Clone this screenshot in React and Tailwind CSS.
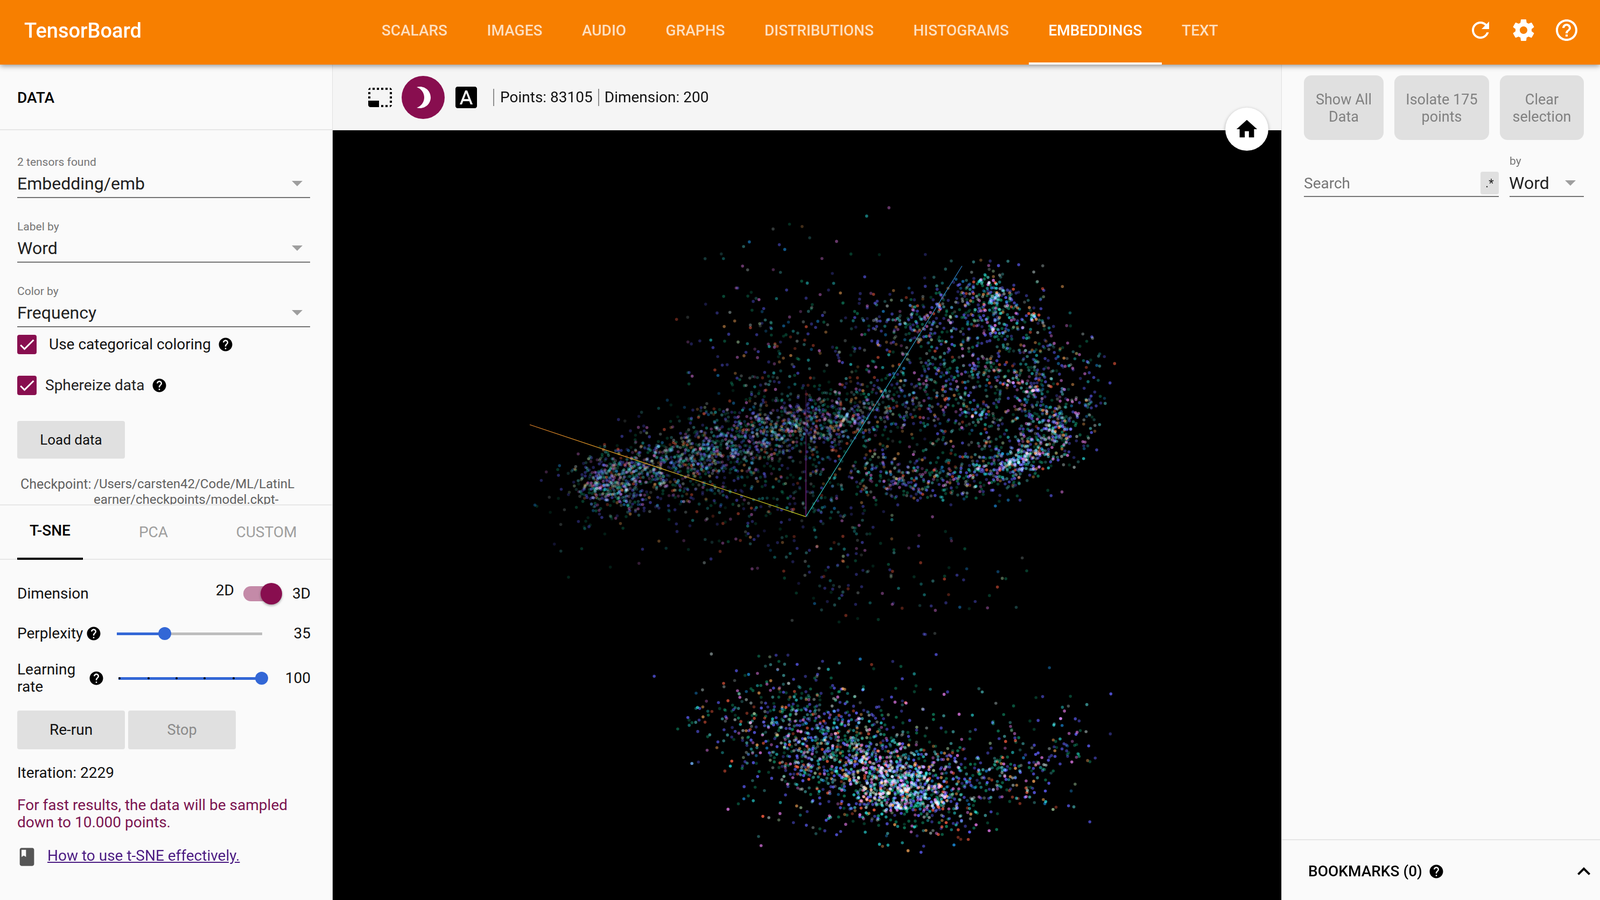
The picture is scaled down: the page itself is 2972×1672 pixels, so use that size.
const ICONS = {
  selection: 'M23 15h-2v2h2v-2zm0-4h-2v2h2v-2zm0 8h-2v2c1 0 2-1 2-2zM15 3h-2v2h2V3zm8 4h-2v2h2V7zm-2-4v2h2c0-1-1-2-2-2zM3 21h8v-6H1v4c0 1.1.9 2 2 2zM3 7H1v2h2V7zm12 12h-2v2h2v-2zm4-16h-2v2h2V3zm0 16h-2v2h2v-2zM3 3C2 3 1 4 1 5h2V3zm0 8H1v2h2v-2zm8-8H9v2h2V3zM7 3H5v2h2V3z',
  moon: 'M9 2c-1.05 0-2.05.16-3 .46 4.06 1.27 7 5.06 7 9.54 0 4.48-2.94 8.27-7 9.54.95.3 1.95.46 3 .46 5.52 0 10-4.48 10-10S14.52 2 9 2z',
  font: 'M9.93 13.5h4.14L12 7.98zM20 2H4c-1.1 0-2 .9-2 2v16c0 1.1.9 2 2 2h16c1.1 0 2-.9 2-2V4c0-1.1-.9-2-2-2zm-4.05 16.5l-1.14-3H9.17l-1.12 3H5.96l5.11-13h1.86l5.11 13h-2.09z',
  home: 'M10 20v-6h4v6h5v-8h3L12 3 2 12h3v8z',
  refresh: 'M17.65 6.35C16.2 4.9 14.21 4 12 4c-4.42 0-7.99 3.58-7.99 8s3.57 8 7.99 8c3.73 0 6.84-2.55 7.73-6h-2.08c-.82 2.33-3.04 4-5.65 4-3.31 0-6-2.69-6-6s2.69-6 6-6c1.66 0 3.14.69 4.22 1.78L13 11h7V4l-2.35 2.35z',
  settings: 'M19.43 12.98c.04-.32.07-.64.07-.98s-.03-.66-.07-.98l2.11-1.65c.19-.15.24-.42.12-.64l-2-3.46c-.12-.22-.39-.3-.61-.22l-2.49 1c-.52-.4-1.08-.73-1.69-.98l-.38-2.65C14.46 2.18 14.25 2 14 2h-4c-.25 0-.46.18-.49.42l-.38 2.65c-.61.25-1.17.59-1.69.98l-2.49-1c-.23-.09-.49 0-.61.22l-2 3.46c-.13.22-.07.49.12.64l2.11 1.65c-.04.32-.07.65-.07.98s.03.66.07.98l-2.11 1.65c-.19.15-.24.42-.12.64l2 3.46c.12.22.39.3.61.22l2.49-1c.52.4 1.08.73 1.69.98l.38 2.65c.03.24.24.42.49.42h4c.25 0 .46-.18.49-.42l.38-2.65c.61-.25 1.17-.59 1.69-.98l2.49 1c.23.09.49 0 .61-.22l2-3.46c.12-.22.07-.49-.12-.64l-2.11-1.65zM12 15.5c-1.93 0-3.5-1.57-3.5-3.5s1.57-3.5 3.5-3.5 3.5 1.57 3.5 3.5-1.57 3.5-3.5 3.5z',
  helpOutline: 'M11 18h2v-2h-2v2zm1-16C6.48 2 2 6.48 2 12s4.48 10 10 10 10-4.48 10-10S17.52 2 12 2zm0 18c-4.41 0-8-3.59-8-8s3.59-8 8-8 8 3.59 8 8-3.59 8-8 8zm0-14c-2.21 0-4 1.79-4 4h2c0-1.1.9-2 2-2s2 .9 2 2c0 2-3 1.75-3 5h2c0-2.25 3-2.5 3-5 0-2.21-1.79-4-4-4z',
  help: 'M12 2C6.48 2 2 6.48 2 12s4.48 10 10 10 10-4.48 10-10S17.52 2 12 2zm1 17h-2v-2h2v2zm2.07-7.75l-.9.92C13.45 12.9 13 13.5 13 15h-2v-.5c0-1.1.45-2.1 1.17-2.83l1.24-1.26c.37-.36.59-.86.59-1.41 0-1.1-.9-2-2-2s-2 .9-2 2H8c0-2.21 1.79-4 4-4s4 1.79 4 4c0 .88-.36 1.68-.93 2.25z',
  check: 'M9 16.17L4.83 12l-1.42 1.41L9 19 21 7l-1.41-1.41z',
  book: 'M18 2H6c-1.1 0-2 .9-2 2v16c0 1.1.9 2 2 2h12c1.1 0 2-.9 2-2V4c0-1.1-.9-2-2-2zM6 4h5v8l-2.5-1.5L6 12V4z',
  chevron: 'M12 8l-6 6 1.41 1.41L12 10.83l4.59 4.58L18 14z',
}

const TABS = ['SCALARS', 'IMAGES', 'AUDIO', 'GRAPHS', 'DISTRIBUTIONS', 'HISTOGRAMS', 'EMBEDDINGS', 'TEXT']

function Icon({ name, className }) {
  return (
    <svg viewBox="0 0 24 24" className={`shrink-0 fill-current ${className}`}>
      <path d={ICONS[name]} />
    </svg>
  )
}

function HelpIcon({ className = '' }) {
  return <Icon name="help" className={`w-[30px] h-[30px] text-black ${className}`} />
}

function Caret() {
  return (
    <svg viewBox="0 0 20 10" className="w-[20px] h-[10px] shrink-0 fill-[#9e9e9e]">
      <path d="M0 0h20L10 10z" />
    </svg>
  )
}

function Dropdown({ label, value }) {
  return (
    <div>
      <div className="text-[21px] leading-[30px] text-[#757575]">{label}</div>
      <div className="h-[52px] flex items-center justify-between pr-[14px] border-b-2 border-[#737373]">
        <span className="text-[32px] text-[#212121]">{value}</span>
        <Caret />
      </div>
    </div>
  )
}

function Checkbox() {
  return (
    <div className="w-[36px] h-[36px] rounded-[4px] bg-[#880e4f] flex items-center justify-center shrink-0">
      <Icon name="check" className="w-[36px] h-[36px] text-white" />
    </div>
  )
}

function GrayButton({ children, className }) {
  return <button className={`w-[200px] rounded-[4px] bg-[#e0e0e0] ${className}`}>{children}</button>
}

function Slider({ className, percent, ticks }) {
  return (
    <div className={`relative h-[30px] flex items-center ${className}`}>
      <div className="w-full h-[5px] bg-[#bdbdbd]">
        <div className="h-full bg-[#3367d6]" style={{ width: `${percent}%` }} />
      </div>
      {ticks &&
        ticks.map((t) => (
          <span key={t} className="absolute top-[13px] w-[4px] h-[4px] rounded-full bg-black" style={{ left: t }} />
        ))}
      <span
        className="absolute top-[3px] w-[24px] h-[24px] -ml-[12px] rounded-full bg-[#3367d6]"
        style={{ left: `${percent}%` }}
      />
    </div>
  )
}

function mulberry32(seed) {
  let a = seed
  return () => {
    a |= 0
    a = (a + 0x6d2b79f5) | 0
    let t = Math.imul(a ^ (a >>> 15), 1 | a)
    t = (t + Math.imul(t ^ (t >>> 7), 61 | t)) ^ t
    return ((t ^ (t >>> 14)) >>> 0) / 4294967296
  }
}

// colour + how often it shows up in the cloud
const PALETTE = [
  ['#5a5aee', 26], ['#0e7a58', 22], ['#3f9f9f', 10], ['#26c9c9', 7], ['#d672dc', 9],
  ['#ef5a3e', 6], ['#e49a52', 5], ['#8a9a9a', 9], ['#1c8fe0', 4], ['#a5d0a0', 2],
]

// cx, cy, sx, sy, rotation in degrees, count, alpha (page pixels)
const BLOBS = [
  [1135, 895, 42, 30, -15, 360, 0.5],
  [1250, 860, 80, 34, -15, 500, 0.5],
  [1400, 812, 100, 34, -15, 540, 0.5],
  [1550, 778, 80, 30, -12, 380, 0.5],
  [1350, 860, 160, 62, -15, 460, 0.42],
  [1500, 945, 120, 50, 0, 230, 0.5],
  [1420, 660, 75, 85, 0, 80, 0.55],
  [1510, 630, 110, 95, -20, 160, 0.6],
  [1840, 565, 44, 36, 0, 260, 0.78],
  [1700, 590, 55, 26, -10, 150, 0.7],
  [1790, 720, 105, 92, 0, 800, 0.68],
  [1885, 858, 56, 18, -15, 280, 0.8],
  [1960, 790, 40, 26, -25, 190, 0.75],
  [1700, 885, 85, 24, 5, 260, 0.68],
  [1925, 690, 32, 58, 0, 140, 0.65],
  [2005, 690, 32, 65, 0, 50, 0.7],
  [1740, 1085, 95, 42, 0, 55, 0.55],
  [1550, 1085, 60, 38, 0, 45, 0.45],
  [1676, 1468, 62, 30, 12, 520, 0.95],
  [1530, 1370, 62, 44, 5, 280, 0.82],
  [1600, 1425, 118, 60, 12, 700, 0.88],
  [1820, 1440, 90, 46, 0, 240, 0.88],
  [1420, 1320, 58, 46, 0, 130, 0.82],
  [1650, 1395, 165, 78, 0, 170, 0.82],
  [1960, 1385, 48, 42, 0, 60, 0.85],
  [1330, 1330, 40, 60, 0, 35, 0.8],
  [1500, 1270, 130, 30, 0, 35, 0.75],
]

// little bright clumps, the white streaks in the cloud
const CLUMPS = [
  [1110, 905, 0.5], [1150, 910, 0.45], [1300, 830, 0.45], [1480, 790, 0.45], [1565, 780, 0.45], [1830, 525, 0.85],
  [1855, 550, 0.85], [1850, 615, 0.85], [1915, 590, 0.8], [1815, 770, 0.8], [1885, 710, 0.8], [1920, 725, 0.8],
  [1880, 860, 0.9], [1910, 845, 0.9], [1960, 795, 0.8], [1640, 1430, 0.95], [1680, 1470, 0.95], [1700, 1440, 0.95],
  [1670, 1500, 0.95], [1600, 1410, 0.85], [1740, 1490, 0.9], [1660, 1455, 0.95],
]

function buildPoints() {
  const rand = mulberry32(42)
  const total = PALETTE.reduce((s, p) => s + p[1], 0)
  // cut the tails so nothing lands far outside the cloud
  const gauss = () => {
    const g = Math.sqrt(-2 * Math.log(rand() + 1e-6)) * Math.cos(2 * Math.PI * rand())
    return Math.max(-2.3, Math.min(2.3, g)) * (0.92 + rand() * 0.08)
  }
  const pick = () => {
    let r = rand() * total
    for (const p of PALETTE) {
      r -= p[1]
      if (r <= 0) return p[0]
    }
    return PALETTE[0][0]
  }
  const pts = []
  for (const [cx, cy, sx, sy, deg, n, alpha] of BLOBS) {
    const c = Math.cos((deg * Math.PI) / 180)
    const s = Math.sin((deg * Math.PI) / 180)
    for (let i = 0; i < n; i++) {
      const dx = gauss() * sx
      const dy = gauss() * sy
      pts.push({
        x: +(cx + dx * c - dy * s).toFixed(1),
        y: +(cy + dx * s + dy * c).toFixed(1),
        fill: pick(),
        o: +(alpha * (0.45 + rand() * 0.55)).toFixed(2),
      })
    }
  }
  for (const [cx, cy, alpha] of CLUMPS) {
    for (let i = 0; i < 12; i++) {
      pts.push({ x: +(cx + gauss() * 10).toFixed(1), y: +(cy + gauss() * 5).toFixed(1), fill: pick(), o: alpha })
    }
  }
  return pts
}

const POINTS = buildPoints()

// viewBox is in page pixels so the numbers read the same as the screenshot
function Projection() {
  return (
    <svg viewBox="618 242 1762 1430" className="block w-[1762px] h-[1430px]">
      <defs>
        <linearGradient id="axisX" gradientUnits="userSpaceOnUse" x1="984" y1="789" x2="1497" y2="960">
          <stop offset="0" stopColor="#e8862a" />
          <stop offset="1" stopColor="#d8e020" />
        </linearGradient>
        <linearGradient id="axisY" gradientUnits="userSpaceOnUse" x1="1497" y1="960" x2="1787" y2="494">
          <stop offset="0" stopColor="#30e0d0" />
          <stop offset="1" stopColor="#2f7fc8" />
        </linearGradient>
        <linearGradient id="axisZ" gradientUnits="userSpaceOnUse" x1="1497" y1="960" x2="1497" y2="725">
          <stop offset="0" stopColor="#a030b0" />
          <stop offset="1" stopColor="#3a1540" />
        </linearGradient>
      </defs>
      <g className="[&>circle]:mix-blend-screen">
        {POINTS.map((p, i) => (
          <circle key={i} cx={p.x} cy={p.y} r="2.8" fill={p.fill} fillOpacity={p.o} />
        ))}
      </g>
      <line x1="984" y1="789" x2="1497" y2="960" stroke="url(#axisX)" strokeWidth="1.2" />
      <line x1="1497" y1="960" x2="1787" y2="494" stroke="url(#axisY)" strokeWidth="1.2" />
      <line x1="1497" y1="960" x2="1497" y2="725" stroke="url(#axisZ)" strokeWidth="1.2" />
    </svg>
  )
}

function LeftPanel() {
  return (
    <aside className="w-[618px] shrink-0 bg-[#fafafa] border-r border-[#e0e0e0] flex flex-col">
      <div className="h-[122px] shrink-0 flex items-center pl-[32px] pt-[4px] border-b-2 border-[#e6e6e6] text-[28px] font-medium text-black">
        DATA
      </div>

      {/* Data section, clipped the way the real panel scrolls */}
      <div className="h-[695px] shrink-0 overflow-hidden pl-[32px] pr-[41px] pt-[44px]">
        <div className="flex flex-col gap-[38px]">
          <Dropdown label="2 tensors found" value="Embedding/emb" />
          <Dropdown label="Label by" value="Word" />
          <Dropdown label="Color by" value="Frequency" />
        </div>
        <div className="mt-[14px] h-[36px] flex items-center text-[28px] leading-[36px] text-[#111]">
          <Checkbox />
          <span className="ml-[23px]">Use categorical coloring</span>
          <HelpIcon className="ml-[12px]" />
        </div>
        <div className="mt-[40px] h-[36px] flex items-center text-[28px] leading-[36px] text-[#222]">
          <Checkbox />
          <span className="ml-[16px]">Sphereize data</span>
          <HelpIcon className="ml-[13px]" />
        </div>
        <div className="mt-[48px] h-[70px] flex">
          <GrayButton className="text-[26px] text-[#111]">Load data</GrayButton>
        </div>
        <div className="mt-[33px] flex leading-[29px] text-[#616161]">
          <span className="w-[136px] ml-[6px] shrink-0 text-[25px]">Checkpoint:</span>
          <span className="w-[380px] break-all text-[24px]">/Users/carsten42/Code/ML/LatinLearner/checkpoints/model.ckpt-</span>
        </div>
      </div>

      {/* Projection tabs */}
      <div className="h-[103px] shrink-0 flex items-stretch pl-[32px] border-y-2 border-[#e6e6e6] text-[28px]">
        <div className="w-[122px] -mb-[2px] pb-[4px] flex items-center justify-center border-b-4 border-black font-medium text-black">T-SNE</div>
        <div className="w-[262px] flex items-center justify-center text-[#9e9e9e]">PCA</div>
        <div className="w-[158px] flex items-center justify-center text-[#9e9e9e]">CUSTOM</div>
      </div>

      <div className="pl-[32px] pr-[40px] text-[28px] text-[#111]">
        <div className="mt-[43px] h-[40px] flex items-center">
          <span className="flex-1">Dimension</span>
          <span className="mb-[12px]">2D</span>
          <div className="relative ml-[17px] w-[72px] h-[40px] flex items-center">
            <div className="w-[58px] h-[28px] rounded-full bg-[#c48aa8]" />
            <span className="absolute right-0 top-0 w-[40px] h-[40px] rounded-full bg-[#880e4f] shadow-[0_2px_4px_rgba(0,0,0,0.35)]" />
          </div>
          <span className="ml-[19px]">3D</span>
        </div>

        <div className="mt-[39px] h-[30px] flex items-center">
          <span>Perplexity</span>
          <HelpIcon className="ml-[5px]" />
          <Slider className="ml-[28px] w-[270px]" percent={33} />
          <span className="flex-1 text-right">35</span>
        </div>

        <div className="mt-[36px] flex items-center">
          <span className="w-[132px] shrink-0 leading-[32px]">
            Learning
            <br />
            rate
          </span>
          <HelpIcon />
          <Slider className="ml-[26px] w-[266px]" percent={100} ticks={[0, 54, 106, 158, 212]} />
          <span className="flex-1 text-right">100</span>
        </div>

        <div className="mt-[28px] h-[72px] flex gap-[6px]">
          <GrayButton className="text-[28px] text-[#111]">Re-run</GrayButton>
          <GrayButton className="text-[27px] text-[#8a8a8a]">Stop</GrayButton>
        </div>

        <div className="mt-[28px] leading-[32px]">Iteration: 2229</div>
        <div className="mt-[28px] leading-[32px] text-[#7b1450]">
          For fast results, the data will be sampled
          <br />
          down to 10.000 points.
        </div>
        <div className="mt-[28px] flex items-center">
          <Icon name="book" className="ml-[-2px] w-[40px] h-[40px] text-[#555]" />
          <a className="ml-[18px] -mt-[4px] underline text-[#4a1a82]">How to use t-SNE effectively.</a>
        </div>
      </div>
    </aside>
  )
}

function CenterPanel() {
  return (
    <main className="flex-1 min-w-0 flex flex-col relative">
      <div className="h-[122px] shrink-0 bg-[#f5f5f5] flex items-center pl-[64px] text-[28px] text-[#111]">
        <Icon name="selection" className="w-[48px] h-[48px] text-black" />
        <div className="ml-[16px] w-[80px] h-[80px] rounded-full bg-[#880e4f] flex items-center justify-center">
          <Icon name="moon" className="w-[48px] h-[48px] text-white" />
        </div>
        <Icon name="font" className="ml-[16px] w-[48px] h-[48px] text-black" />
        <div className="ml-[26px] h-[32px] flex items-center border-l-2 border-[#8f8f8f] pl-[11px]">Points: 83105</div>
        <div className="ml-[10px] h-[32px] flex items-center border-l-2 border-[#8f8f8f] pl-[10px]">Dimension: 200</div>
      </div>
      <div className="flex-1 bg-black overflow-hidden">
        <Projection />
      </div>
      <button className="absolute top-[80px] right-[24px] w-[80px] h-[80px] rounded-full bg-white flex items-center justify-center shadow-[0_2px_6px_rgba(0,0,0,0.3)]">
        <Icon name="home" className="w-[46px] h-[46px] text-black" />
      </button>
    </main>
  )
}

function RightPanel() {
  return (
    <aside className="w-[592px] shrink-0 bg-[#fafafa] border-l border-[#e0e0e0] flex flex-col">
      <div className="flex-1 pl-[41px] pr-[30px] pt-[20px]">
        <div className="h-[120px] flex gap-[20px] text-[27px] leading-[32px] text-[#808080]">
          <button className="w-[148px] pt-[2px] rounded-[14px] bg-[#e0e0e0]">Show All<br />Data</button>
          <button className="w-[176px] pt-[2px] rounded-[14px] bg-[#e0e0e0]">Isolate 175<br />points</button>
          <button className="w-[156px] pt-[2px] rounded-[14px] bg-[#e0e0e0]">Clear<br />selection</button>
        </div>
        <div className="mt-[24px] flex gap-[20px] items-end">
          <div className="w-[362px] h-[51px] flex items-center justify-between border-b-2 border-[#757575]">
            <span className="pt-[2px] text-[28px] text-[#757575]">Search</span>
            <span className="w-[34px] h-[42px] -mb-[1px] rounded-[4px] bg-[#e0e0e0] flex items-center justify-center text-[22px] text-[#222]">.*</span>
          </div>
          <div className="w-[138px]">
            <div className="text-[21px] leading-[30px] text-[#757575]">by</div>
            <div className="h-[52px] pt-[2px] flex items-center justify-between pr-[15px] border-b-2 border-[#737373]">
              <span className="-ml-[1px] text-[32px] text-[#212121]">Word</span>
              <Caret />
            </div>
          </div>
        </div>
      </div>
      <div className="h-[113px] shrink-0 border-t-2 border-[#e6e6e6] pl-[49px] pr-[6px] pt-[5px] flex items-center text-[28px] font-medium text-black">
        <span>BOOKMARKS (0)</span>
        <HelpIcon className="ml-[11px]" />
        <Icon name="chevron" className="ml-auto w-[48px] h-[48px] text-black" />
      </div>
    </aside>
  )
}

function App() {
  return (
    <div className="w-[2972px] h-[1672px] overflow-hidden flex flex-col font-['Roboto',sans-serif]">
      <header className="relative z-10 h-[120px] shrink-0 bg-[#f77f00] flex items-stretch text-white shadow-[0_2px_10px_rgba(0,0,0,0.45)]">
        <div className="w-[672px] shrink-0 pl-[45px] pb-[6px] flex items-center text-[38px] font-medium">TensorBoard</div>
        <nav className="flex items-stretch text-[28px] font-medium">
          {TABS.map((tab) => (
            <div
              key={tab}
              className={`px-[36.75px] pb-[3px] flex items-center border-b-4 ${tab === 'EMBEDDINGS' ? 'border-white text-white' : 'border-transparent text-white/75'}`}
            >
              {tab}
            </div>
          ))}
        </nav>
        <div className="ml-auto pr-[38px] pb-[8px] flex items-center gap-[32px]">
          <Icon name="refresh" className="w-[48px] h-[48px]" />
          <Icon name="settings" className="w-[48px] h-[48px]" />
          <Icon name="helpOutline" className="w-[48px] h-[48px]" />
        </div>
      </header>
      <div className="flex-1 min-h-0 flex">
        <LeftPanel />
        <CenterPanel />
        <RightPanel />
      </div>
    </div>
  )
}

export default App
